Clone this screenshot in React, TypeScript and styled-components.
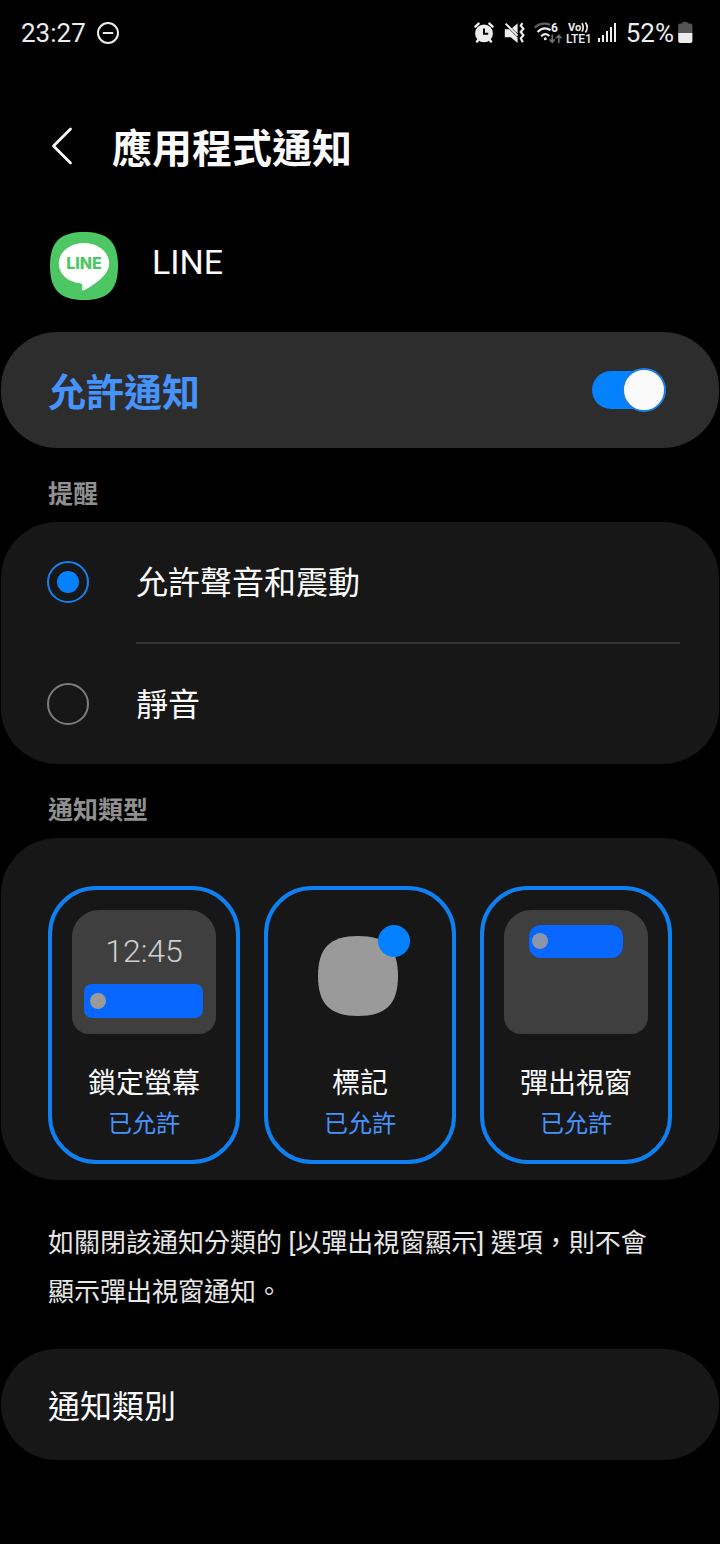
import React, { useState } from "react";
import styled, { createGlobalStyle } from "styled-components";

const color = {
  background: "#000000",
  card: "#171717",
  cardRaised: "#2d2d2d",
  text: "#fafafa",
  muted: "#909090",
  accent: "#0381fe",
  accentText: "#4693fb",
};

const GlobalStyle = createGlobalStyle`
  *, *::before { box-sizing: border-box; }
  body {
    margin: 0;
    background: ${color.background};
    color: ${color.text};
    font-family: Roboto, "Noto Sans CJK TC", sans-serif;
  }
  button, input { margin: 0; font: inherit; color: inherit; }
  svg { display: block; flex: none; }
`;

const Screen = styled.div`
  display: flex;
  flex-direction: column;
  padding-bottom: 84px;
`;

const StatusBar = styled.div`
  display: flex;
  justify-content: space-between;
  align-items: center;
  height: 64px;
  padding: 2px 27px 0 21px;
  font-size: 26px;
  line-height: 32px;
  color: #ececec;
`;

const StatusGroup = styled.div<{ $gap: number }>`
  display: flex;
  align-items: center;
  gap: ${(p) => p.$gap}px;
`;

const Header = styled.header`
  display: flex;
  align-items: center;
  gap: 28px;
  padding: 56px 40px 46px;
`;

const BackButton = styled.button`
  display: flex;
  align-items: center;
  justify-content: center;
  width: 44px;
  height: 44px;
  margin-bottom: 8px;
  padding: 0;
  border: 0;
  background: none;
`;

const Title = styled.h1`
  margin: 0;
  font-size: 40px;
  line-height: 60px;
  font-weight: 700;
`;

const AppRow = styled.div`
  display: flex;
  align-items: center;
  gap: 34px;
  padding: 6px 50px 32px;
`;

const AppName = styled.span`
  padding-bottom: 8px;
  font-size: 34px;
  line-height: 40px;
`;

const Card = styled.section<{ $raised?: boolean }>`
  margin: 0 1px;
  border-radius: 56px;
  background: ${(p) => (p.$raised ? color.cardRaised : color.card)};
`;

const SwitchRow = styled.label`
  display: flex;
  align-items: center;
  justify-content: space-between;
  height: 116px;
  padding: 0 53px 0 47px;
`;

const SwitchText = styled.span`
  padding-top: 6px;
  font-size: 38px;
  line-height: 56px;
  font-weight: 600;
  color: ${color.accentText};
`;

const Switch = styled.input`
  appearance: none;
  display: flex;
  align-items: center;
  width: 74px;
  height: 38px;
  border-radius: 19px;
  background: #5a5a5a;

  &::before {
    content: "";
    flex: none;
    width: 44px;
    height: 44px;
    border: 2px solid #5a5a5a;
    border-radius: 50%;
    background: ${color.text};
  }
  &:checked {
    justify-content: flex-end;
    background: ${color.accent};
  }
  &:checked::before {
    border-color: #1b7fe2;
  }
`;

const SectionLabel = styled.h2`
  margin: 0;
  padding: 28px 48px 8px;
  font-size: 25px;
  line-height: 38px;
  font-weight: 600;
  color: ${color.muted};
`;

const RadioRow = styled.label`
  display: flex;
  align-items: center;
  gap: 47px;
  height: 120px;
  padding: 0 46px;
  font-size: 32px;
  line-height: 48px;
`;

const RadioText = styled.span`
  padding-top: 2px;
`;

const Radio = styled.input`
  appearance: none;
  display: grid;
  place-items: center;
  width: 42px;
  height: 42px;
  border: 2px solid #7c7c7c;
  border-radius: 50%;

  &:checked {
    border-color: #1481ee;
  }
  &:checked::before {
    content: "";
    width: 22px;
    height: 22px;
    border-radius: 50%;
    background: ${color.accent};
  }
`;

const Divider = styled.hr`
  height: 2px;
  margin: 0 39px 0 135px;
  border: 0;
  background: #343434;
`;

const TypeGrid = styled.div`
  display: grid;
  grid-template-columns: repeat(3, 1fr);
  gap: 24px;
  padding: 48px 47px 16px;
`;

const TypeTile = styled.button`
  display: flex;
  flex-direction: column;
  align-items: center;
  padding: 20px 0 16px;
  border: 4px solid transparent;
  border-radius: 48px;
  background: none;

  &[aria-pressed="true"] {
    border-color: #0f80f2;
  }
`;

const TypeName = styled.span`
  padding-top: 28px;
  font-size: 28px;
  line-height: 44px;
`;

const TypeState = styled.span`
  padding-bottom: 2px;
  font-size: 24px;
  line-height: 36px;
  color: ${color.accentText};
`;

const Note = styled.p`
  margin: 0;
  padding: 39px 48px 32px;
  font-size: 26px;
  line-height: 49px;
  color: #e6e6e6;
`;

const CategoryButton = styled.button`
  display: block;
  width: 100%;
  padding: 34px 47px 29px;
  border: 0;
  background: none;
  text-align: left;
  font-size: 32px;
  line-height: 48px;
`;

const DoNotDisturbIcon = () => (
  <svg width="24" height="24" viewBox="0 0 24 24" fill="none" stroke="#ececec" strokeWidth="2">
    <circle cx="12" cy="12" r="10" />
    <path d="M6.8 12h10.4" />
  </svg>
);

const AlarmIcon = () => (
  <svg width="26" height="24" viewBox="0 0 26 24">
    <g stroke="#ececec" strokeWidth="2.4" strokeLinecap="round" fill="none">
      <path d="M1.4 5.600 4.600 2.600M18.600 5.600 15.400 2.600M4.6 18.5 3 20.6M15.4 18.5l1.6 2.1" />
    </g>
    <circle cx="10" cy="12.4" r="8.900" fill="#ececec" />
    <path d="M10 7.6v5.2h4.2" fill="none" stroke="#000" strokeWidth="1.9" />
  </svg>
);

const MuteIcon = () => (
  <svg width="26" height="24" viewBox="0 0 26 24">
    <path d="M.8 8.2h4.4l8.4 8.4v5.4L6.8 16.2H.8zM8 7.2l5.6-5v10.2z" fill="#ececec" />
    <path d="M1.6 2.6 13.6 14.6" stroke="#ececec" strokeWidth="2" />
    <path
      d="M18.4 2.2 16.8 4.6l2.6 3.2-2.6 3.2 2.6 3.2-2.6 3.2 2 3.8"
      fill="none"
      stroke="#ececec"
      strokeWidth="2.2"
    />
  </svg>
);

const WifiIcon = () => (
  <svg width="28" height="24" viewBox="0 0 28 24">
    <g fill="none" strokeWidth="2.2">
      <path d="M.8 6.6C4.4 3.2 10 1.8 16 3.6" stroke="#606060" />
      <path d="M3.6 11C7.6 6.8 12.6 6.6 16.6 9.2" stroke="#ececec" />
      <path d="M7.2 15.2C9.6 12.8 12.8 12.8 15.4 15" stroke="#ececec" />
    </g>
    <circle cx="11.3" cy="17.8" r="1.5" fill="#ececec" />
    <text x="17" y="11" fontSize="12" fontWeight="700" fill="#ececec">
      6
    </text>
    <path
      d="M18.2 13.4v7.4M15.6 18.4l2.6 2.8 2.6-2.8M24.8 22v-7.4M22.2 17.2l2.6-2.8 2.6 2.8"
      fill="none"
      stroke="#707070"
      strokeWidth="1.6"
    />
  </svg>
);

const VolteIcon = () => (
  <svg width="28" height="24" viewBox="0 0 28 24" fill="#ececec">
    <text x="2" y="10" fontSize="11" fontWeight="700">
      Vo
    </text>
    <path
      d="M16 2.2q2.4 4.2 0 8.4M19.400 1.400q3.600 5 0 10"
      fill="none"
      stroke="#ececec"
      strokeWidth="1.7"
    />
    <text x="0" y="22" fontSize="12" fontWeight="500">
      LTE1
    </text>
  </svg>
);

const SignalIcon = () => (
  <svg width="24" height="24" viewBox="0 0 24 24" fill="#ececec">
    <rect x="0" y="17" width="2" height="4" />
    <rect x="4" y="14" width="2" height="7" />
    <rect x="8" y="10" width="2" height="11" />
    <rect x="12" y="6" width="2" height="15" />
    <rect x="16" y="2" width="2" height="19" />
  </svg>
);

const BatteryIcon = () => (
  <svg width="15" height="24" viewBox="0 0 15 24">
    <path
      d="M4.4 1h5.2v1.6h2.8a2 2 0 0 1 2 2V12H.2V4.6a2 2 0 0 1 2-2h2.2z"
      fill="#555"
    />
    <path d="M.2 12h14.2v8a2 2 0 0 1-2 2H2.2a2 2 0 0 1-2-2z" fill="#ececec" />
  </svg>
);

const BackIcon = () => (
  <svg width="44" height="44" viewBox="0 0 44 44" fill="none">
    <path
      d="M30.5 5 13.5 22l17 17"
      stroke={color.text}
      strokeWidth="2.8"
      strokeLinecap="round"
      strokeLinejoin="round"
    />
  </svg>
);

const LineLogo = () => (
  <svg width="68" height="68" viewBox="0 0 68 68" role="img" aria-label="LINE">
    <path
      d="M34 0C58 0 68 10 68 34S58 68 34 68 0 58 0 34 10 0 34 0z"
      fill="#4cc764"
    />
    <path
      d="M34 11C48 11 59.200 20 59.200 31.400c0 5-2.400 9.400-6.400 13.400C48 49.800 39.600 56 33.800 58.200c-2 .8-2-.6-1.600-2.600.6-3-.2-4-2.400-4.400C17.600 49.800 8.800 41.800 8.800 31.400 8.800 20 20 11 34 11z"
      fill="#fff"
    />
    <text
      x="34"
      y="37"
      textAnchor="middle"
      fontFamily="Inter, Roboto, sans-serif"
      fontSize="16"
      fontWeight="800"
      fill="#4cc764"
    >
      LINE
    </text>
  </svg>
);

const Preview = ({ children }: { children: React.ReactNode }) => (
  <svg width="144" height="124" viewBox="0 0 144 124" aria-hidden="true">
    {children}
  </svg>
);

const PreviewFrame = () => (
  <path
    d="M27 0h90a27 27 0 0 1 27 27v80a17 17 0 0 1-17 17H17a17 17 0 0 1-17-17V27A27 27 0 0 1 27 0z"
    fill="#3f3f3f"
  />
);

const LockScreenPreview = () => (
  <Preview>
    <PreviewFrame />
    <text x="72" y="52" textAnchor="middle" fontSize="32" fontWeight="300" fill="#cfcfcf">
      12:45
    </text>
    <rect x="12" y="74" width="119" height="34" rx="8" fill="#0767ff" />
    <circle cx="26" cy="91" r="8" fill="#9a9a9a" />
  </Preview>
);

const BadgePreview = () => (
  <Preview>
    <path
      d="M70 26C98 26 110 38 110 66S98 106 70 106 30 94 30 66 42 26 70 26z"
      fill="#9a9a9a"
    />
    <circle cx="106" cy="31" r="16" fill={color.accent} />
  </Preview>
);

const PopupPreview = () => (
  <Preview>
    <PreviewFrame />
    <rect x="25" y="15" width="94" height="33" rx="12" fill="#0767ff" />
    <circle cx="36" cy="31" r="8" fill="#8c96ab" />
  </Preview>
);

const alertModes = ["允許聲音和震動", "靜音"];

const notificationTypes = [
  { name: "鎖定螢幕", preview: <LockScreenPreview /> },
  { name: "標記", preview: <BadgePreview /> },
  { name: "彈出視窗", preview: <PopupPreview /> },
];

export default function App() {
  const [allowed, setAllowed] = useState(true);
  const [mode, setMode] = useState(alertModes[0]);
  const [enabled, setEnabled] = useState([true, true, true]);

  const toggleType = (index: number) =>
    setEnabled(enabled.map((on, i) => (i === index ? !on : on)));

  return (
    <Screen>
      <GlobalStyle />
      <StatusBar>
        <StatusGroup $gap={10}>
          <span>23:27</span>
          <DoNotDisturbIcon />
        </StatusGroup>
        <StatusGroup $gap={4}>
          <AlarmIcon />
          <MuteIcon />
          <WifiIcon />
          <VolteIcon />
          <SignalIcon />
          <span>52%</span>
          <BatteryIcon />
        </StatusGroup>
      </StatusBar>

      <Header>
        <BackButton aria-label="返回">
          <BackIcon />
        </BackButton>
        <Title>應用程式通知</Title>
      </Header>

      <main>
        <AppRow>
          <LineLogo />
          <AppName>LINE</AppName>
        </AppRow>

        <Card $raised>
          <SwitchRow>
            <SwitchText>允許通知</SwitchText>
            <Switch
              type="checkbox"
              role="switch"
              checked={allowed}
              onChange={(e) => setAllowed(e.target.checked)}
            />
          </SwitchRow>
        </Card>

        <SectionLabel>提醒</SectionLabel>
        <Card>
          {alertModes.map((name, index) => (
            <React.Fragment key={name}>
              {index > 0 && <Divider />}
              <RadioRow>
                <Radio
                  type="radio"
                  name="alert-mode"
                  checked={mode === name}
                  onChange={() => setMode(name)}
                />
                <RadioText>{name}</RadioText>
              </RadioRow>
            </React.Fragment>
          ))}
        </Card>

        <SectionLabel>通知類型</SectionLabel>
        <Card>
          <TypeGrid>
            {notificationTypes.map((type, index) => (
              <TypeTile
                key={type.name}
                aria-pressed={enabled[index]}
                onClick={() => toggleType(index)}
              >
                {type.preview}
                <TypeName>{type.name}</TypeName>
                <TypeState>{enabled[index] ? "已允許" : "已關閉"}</TypeState>
              </TypeTile>
            ))}
          </TypeGrid>
        </Card>

        <Note>如關閉該通知分類的 [以彈出視窗顯示] 選項，則不會顯示彈出視窗通知。</Note>

        <Card>
          <CategoryButton>通知類別</CategoryButton>
        </Card>
      </main>
    </Screen>
  );
}
